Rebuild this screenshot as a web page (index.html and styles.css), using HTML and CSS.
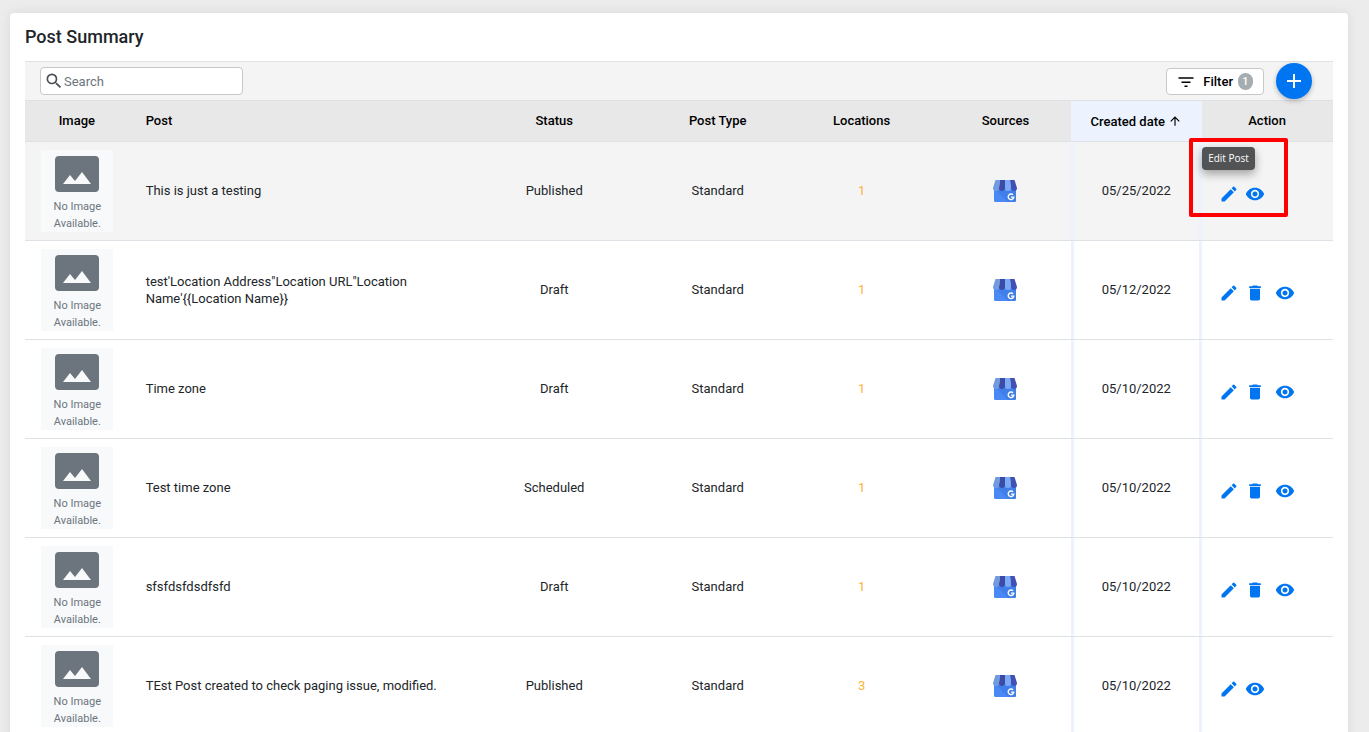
FILE: index.html
```html
<!DOCTYPE html>
<html lang="en">

<head>
    <meta charset="UTF-8">
    <meta name="viewport" content="width=device-width, initial-scale=1.0">
    <title>Post Summary</title>
    <link rel="stylesheet" href="styles.css">
</head>

<body>
    <!-- shared icons -->
    <svg class="sprite" aria-hidden="true">
        <symbol id="icon-search" viewBox="0 0 24 24"><path d="M15.5 14h-.79l-.28-.27A6.47 6.47 0 0 0 16 9.5 6.5 6.5 0 1 0 9.5 16c1.61 0 3.09-.59 4.23-1.57l.27.28v.79l5 4.99L20.49 19l-4.99-5zm-6 0C7.01 14 5 11.99 5 9.5S7.01 5 9.5 5 14 7.01 14 9.5 11.99 14 9.5 14z"/></symbol>
        <symbol id="icon-filter" viewBox="0 0 24 24"><path d="M10 20h4v-2h-4v2zM2 7v2h20V7H2zm4 7.500h12v-2H6v2z"/></symbol>
        <symbol id="icon-plus" viewBox="0 0 24 24"><path d="M19 13h-6v6h-2v-6H5v-2h6V5h2v6h6v2z"/></symbol>
        <symbol id="icon-up" viewBox="0 0 24 24"><path d="M4 12l1.41 1.41L11 7.83V20h2V7.83l5.58 5.59L20 12l-8-8-8 8z"/></symbol>
        <symbol id="icon-edit" viewBox="0 0 24 24"><path d="M3 17.25V21h3.75L17.81 9.94l-3.75-3.75L3 17.25zM20.71 7.04a1 1 0 0 0 0-1.41l-2.34-2.34a1 1 0 0 0-1.41 0l-1.83 1.83 3.75 3.75 1.83-1.83z"/></symbol>
        <symbol id="icon-delete" viewBox="0 0 24 24"><path d="M6 19c0 1.100.9 2 2 2h8c1.100 0 2-.9 2-2V7H6v12zM19 4h-3.500l-1-1h-5l-1 1H5v2h14V4z"/></symbol>
        <symbol id="icon-view" viewBox="0 0 24 24"><path d="M12 4.500C7 4.500 2.730 7.610 1 12c1.730 4.390 6 7.500 11 7.500s9.270-3.110 11-7.500c-1.730-4.390-6-7.500-11-7.500zM12 17c-2.760 0-5-2.240-5-5s2.240-5 5-5 5 2.240 5 5-2.240 5-5 5zm0-8c-1.660 0-3 1.340-3 3s1.340 3 3 3 3-1.340 3-3-1.340-3-3-3z"/></symbol>
        <symbol id="icon-image" viewBox="0 0 44 36"><rect width="44" height="36" rx="4" fill="#6c757d"/><path d="M8 28l7-9 5 6 7-9 9 12z" fill="#f8f9fa"/></symbol>
        <symbol id="icon-store" viewBox="0 0 24 24">
            <path d="M1 8h22v13.500q0 1.500-1.500 1.500h-19Q1 23 1 21.500z" fill="#4989f5"/>
            <path d="M4 12l11 11h6.500q1.500 0 1.500-1.500V12z" fill="#3c78e0" opacity=".6"/>
            <path d="M2.500 1H7l-1 8a3 3 0 0 1-6 0z" fill="#709be0"/>
            <path d="M7 1h5v8a3 3 0 0 1-6 0z" fill="#3c4ba6"/>
            <path d="M12 1h5l1 8a3 3 0 0 1-6 0z" fill="#7baaf7"/>
            <path d="M17 1h4.500L24 9a3 3 0 0 1-6 0z" fill="#3f51b5"/>
            <path d="M20 15.800a2.800 2.800 0 1 0 .8 2.300h-2.800" fill="none" stroke="#fff" stroke-width="1.400"/>
        </symbol>
    </svg>

    <main class="card">
        <h1>Post Summary</h1>
        <div class="toolbar">
            <label class="search">
                <svg><use href="#icon-search"/></svg>
                <input type="text" placeholder="Search" aria-label="Search">
            </label>
            <button type="button" class="filter-btn"><svg><use href="#icon-filter"/></svg>Filter<span class="count">1</span></button>
            <button type="button" class="add-btn" aria-label="Add post"><svg><use href="#icon-plus"/></svg></button>
        </div>
        <table class="posts">
            <colgroup>
                <col class="w-image"><col class="w-post"><col class="w-status"><col class="w-type">
                <col class="w-locations"><col class="w-sources"><col class="w-date"><col class="w-action">
            </colgroup>
            <thead>
                <tr>
                    <th>Image</th>
                    <th class="post">Post</th>
                    <th>Status</th>
                    <th>Post Type</th>
                    <th>Locations</th>
                    <th>Sources</th>
                    <th class="sorted"><span>Created date<svg><use href="#icon-up"/></svg></span></th>
                    <th>Action</th>
                </tr>
            </thead>
            <tbody>
                <tr class="active">
                    <td class="image"><div class="no-image"><svg><use href="#icon-image"/></svg>No Image Available.</div></td>
                    <td class="post">This is just a testing</td>
                    <td>Published</td>
                    <td>Standard</td>
                    <td><a href="#" class="loc">1</a></td>
                    <td><svg class="store"><use href="#icon-store"/></svg></td>
                    <td class="date">05/25/2022</td>
                    <td class="action">
                        <div class="buttons">
                            <button type="button" aria-label="Edit post"><svg><use href="#icon-edit"/></svg></button>
                            <button type="button" aria-label="View post"><svg><use href="#icon-view"/></svg></button>
                        </div>
                        <div class="highlight"></div>
                        <div class="tooltip" role="tooltip">Edit Post</div>
                    </td>
                </tr>
                <tr>
                    <td class="image"><div class="no-image"><svg><use href="#icon-image"/></svg>No Image Available.</div></td>
                    <td class="post">test'Location Address"Location URL"Location Name'{{Location Name}}</td>
                    <td>Draft</td>
                    <td>Standard</td>
                    <td><a href="#" class="loc">1</a></td>
                    <td><svg class="store"><use href="#icon-store"/></svg></td>
                    <td class="date">05/12/2022</td>
                    <td class="action">
                        <div class="buttons">
                            <button type="button" aria-label="Edit post"><svg><use href="#icon-edit"/></svg></button>
                            <button type="button" class="delete" aria-label="Delete post"><svg><use href="#icon-delete"/></svg></button>
                            <button type="button" aria-label="View post"><svg><use href="#icon-view"/></svg></button>
                        </div>
                    </td>
                </tr>
                <tr>
                    <td class="image"><div class="no-image"><svg><use href="#icon-image"/></svg>No Image Available.</div></td>
                    <td class="post">Time zone</td>
                    <td>Draft</td>
                    <td>Standard</td>
                    <td><a href="#" class="loc">1</a></td>
                    <td><svg class="store"><use href="#icon-store"/></svg></td>
                    <td class="date">05/10/2022</td>
                    <td class="action">
                        <div class="buttons">
                            <button type="button" aria-label="Edit post"><svg><use href="#icon-edit"/></svg></button>
                            <button type="button" class="delete" aria-label="Delete post"><svg><use href="#icon-delete"/></svg></button>
                            <button type="button" aria-label="View post"><svg><use href="#icon-view"/></svg></button>
                        </div>
                    </td>
                </tr>
                <tr>
                    <td class="image"><div class="no-image"><svg><use href="#icon-image"/></svg>No Image Available.</div></td>
                    <td class="post">Test time zone</td>
                    <td>Scheduled</td>
                    <td>Standard</td>
                    <td><a href="#" class="loc">1</a></td>
                    <td><svg class="store"><use href="#icon-store"/></svg></td>
                    <td class="date">05/10/2022</td>
                    <td class="action">
                        <div class="buttons">
                            <button type="button" aria-label="Edit post"><svg><use href="#icon-edit"/></svg></button>
                            <button type="button" class="delete" aria-label="Delete post"><svg><use href="#icon-delete"/></svg></button>
                            <button type="button" aria-label="View post"><svg><use href="#icon-view"/></svg></button>
                        </div>
                    </td>
                </tr>
                <tr>
                    <td class="image"><div class="no-image"><svg><use href="#icon-image"/></svg>No Image Available.</div></td>
                    <td class="post">sfsfdsfdsdfsfd</td>
                    <td>Draft</td>
                    <td>Standard</td>
                    <td><a href="#" class="loc">1</a></td>
                    <td><svg class="store"><use href="#icon-store"/></svg></td>
                    <td class="date">05/10/2022</td>
                    <td class="action">
                        <div class="buttons">
                            <button type="button" aria-label="Edit post"><svg><use href="#icon-edit"/></svg></button>
                            <button type="button" class="delete" aria-label="Delete post"><svg><use href="#icon-delete"/></svg></button>
                            <button type="button" aria-label="View post"><svg><use href="#icon-view"/></svg></button>
                        </div>
                    </td>
                </tr>
                <tr>
                    <td class="image"><div class="no-image"><svg><use href="#icon-image"/></svg>No Image Available.</div></td>
                    <td class="post">TEst Post created to check paging issue, modified.</td>
                    <td>Published</td>
                    <td>Standard</td>
                    <td><a href="#" class="loc">3</a></td>
                    <td><svg class="store"><use href="#icon-store"/></svg></td>
                    <td class="date">05/10/2022</td>
                    <td class="action">
                        <div class="buttons">
                            <button type="button" aria-label="Edit post"><svg><use href="#icon-edit"/></svg></button>
                            <button type="button" aria-label="View post"><svg><use href="#icon-view"/></svg></button>
                        </div>
                    </td>
                </tr>
            </tbody>
        </table>
    </main>
</body>

</html>
```
FILE: styles.css
```css
* {
    box-sizing: border-box;
}

body {
    font-family: Roboto, "Liberation Sans", sans-serif;
    font-size: 13px;
    line-height: 17px;
    color: #212529;
    background: #ececec;
    height: 100vh;
    margin: 0;
    padding: 13px 21px 0 10px;
    overflow: hidden;
}

button,
input {
    font: inherit;
    color: inherit;
}

svg {
    display: block;
    fill: currentColor;
}

.sprite {
    position: absolute;
    width: 0;
    height: 0;
}

.card {
    background: #fff;
    border-radius: 4px;
    box-shadow: 0 0 12px rgba(0, 0, 0, 0.08);
    padding: 12px 15px;
}

h1 {
    font-size: 18px;
    line-height: 24px;
    font-weight: 500;
    margin: 0 0 12px;
}

/* toolbar */
.toolbar {
    display: flex;
    align-items: center;
    height: 39px;
    padding: 0 21px 0 15px;
    background: #f4f4f4;
    border-top: 1px solid #dee2e6;
}

.search {
    display: flex;
    align-items: center;
    width: 203px;
    height: 28px;
    padding-left: 3px;
    background: #fff;
    border: 1px solid #c8c8c8;
    border-radius: 4px;
}

.search svg {
    width: 20px;
    height: 20px;
    color: #495057;
}

.search input {
    flex: 1;
    min-width: 0;
    padding: 0;
    background: none;
    border: 0;
    outline: 0;
}

.search input::placeholder {
    color: #6c757d;
}

.filter-btn {
    display: flex;
    align-items: center;
    height: 27px;
    margin-left: auto;
    padding: 0 10px;
    font-weight: 500;
    color: #000;
    background: #fff;
    border: 1px solid #c8c8c8;
    border-radius: 4px;
}

.filter-btn svg {
    width: 18px;
    height: 18px;
    margin-right: 8px;
}

.count {
    width: 15px;
    margin-left: 5px;
    font-size: 11px;
    text-align: center;
    color: #fff;
    background: #a5adb0;
    border-radius: 8px;
}

.add-btn {
    display: grid;
    place-items: center;
    width: 36px;
    height: 36px;
    margin-left: 12px;
    padding: 0;
    color: #fff;
    background: #0075f2;
    border: 0;
    border-radius: 50%;
    box-shadow: 0 2px 5px rgba(0, 0, 0, 0.25);
}

.add-btn svg {
    width: 24px;
    height: 24px;
}

/* table */
.posts {
    width: 100%;
    table-layout: fixed;
    border-spacing: 0;
    text-align: center;
}

.w-image { width: 8%; }
.w-post { width: 25%; }
.w-status { width: 15%; }
.w-type { width: 10%; }
.w-locations { width: 12%; }
.w-sources { width: 10%; }
.w-date { width: 10%; }
.w-action { width: 10%; }

th {
    height: 42px;
    padding: 0 1px 1px 0;
    font-weight: 500;
    color: #000;
    background: #e8e8e8;
    border-top: 1px solid #dee2e6;
    border-bottom: 1px solid #dee2e6;
}

th.sorted {
    padding: 0 1px 0 0;
    background: #ecf3ff;
}

.sorted span {
    display: flex;
    align-items: center;
    justify-content: center;
    gap: 3px;
}

.sorted svg {
    width: 14px;
    height: 14px;
}

td {
    height: 99px;
    padding: 0 1px 1px 0;
    border-bottom: 1px solid #dee2e6;
}

.active td {
    background: #f4f4f4;
}

.posts .post {
    padding: 0 16px 1px;
    text-align: left;
}

.posts .image {
    padding: 0;
}

.date {
    box-shadow: inset 3px 0 #ecf3ff, inset -3px 0 #ecf3ff;
}

.no-image {
    width: 72px;
    height: 82px;
    margin: 0 auto;
    padding: 6px 8px;
    font-size: 11px;
    color: #6c757d;
    background: #f8f9fa;
}

.no-image svg {
    width: 44px;
    height: 36px;
    margin: 0 auto 6px;
}

.loc {
    color: #ffb238;
    text-decoration: none;
}

.store {
    width: 24px;
    height: 24px;
    margin: 0 auto;
}

.posts .action {
    position: relative;
    padding: 0 0 2px;
}

.buttons {
    display: flex;
    gap: 6px;
    padding: 8px 0 0 17px;
}

.buttons button {
    padding: 0;
    color: #0075f2;
    background: none;
    border: 0;
}

.buttons svg {
    width: 20px;
    height: 20px;
}

.buttons .delete {
    margin-right: 4px;
}

.highlight {
    position: absolute;
    top: -4px;
    left: -13px;
    width: 99px;
    height: 79px;
    border: 4px solid #f00;
    border-radius: 2px;
    pointer-events: none;
}

.tooltip {
    position: absolute;
    top: 5px;
    left: 0;
    padding: 3px 6px;
    font-family: "Open Sans", "Noto Sans", sans-serif;
    font-size: 10px;
    font-weight: 500;
    white-space: nowrap;
    color: #fff;
    background: #515355;
    border-radius: 4px;
    box-shadow: 0 4px 10px rgba(0, 0, 0, 0.35);
}
```
